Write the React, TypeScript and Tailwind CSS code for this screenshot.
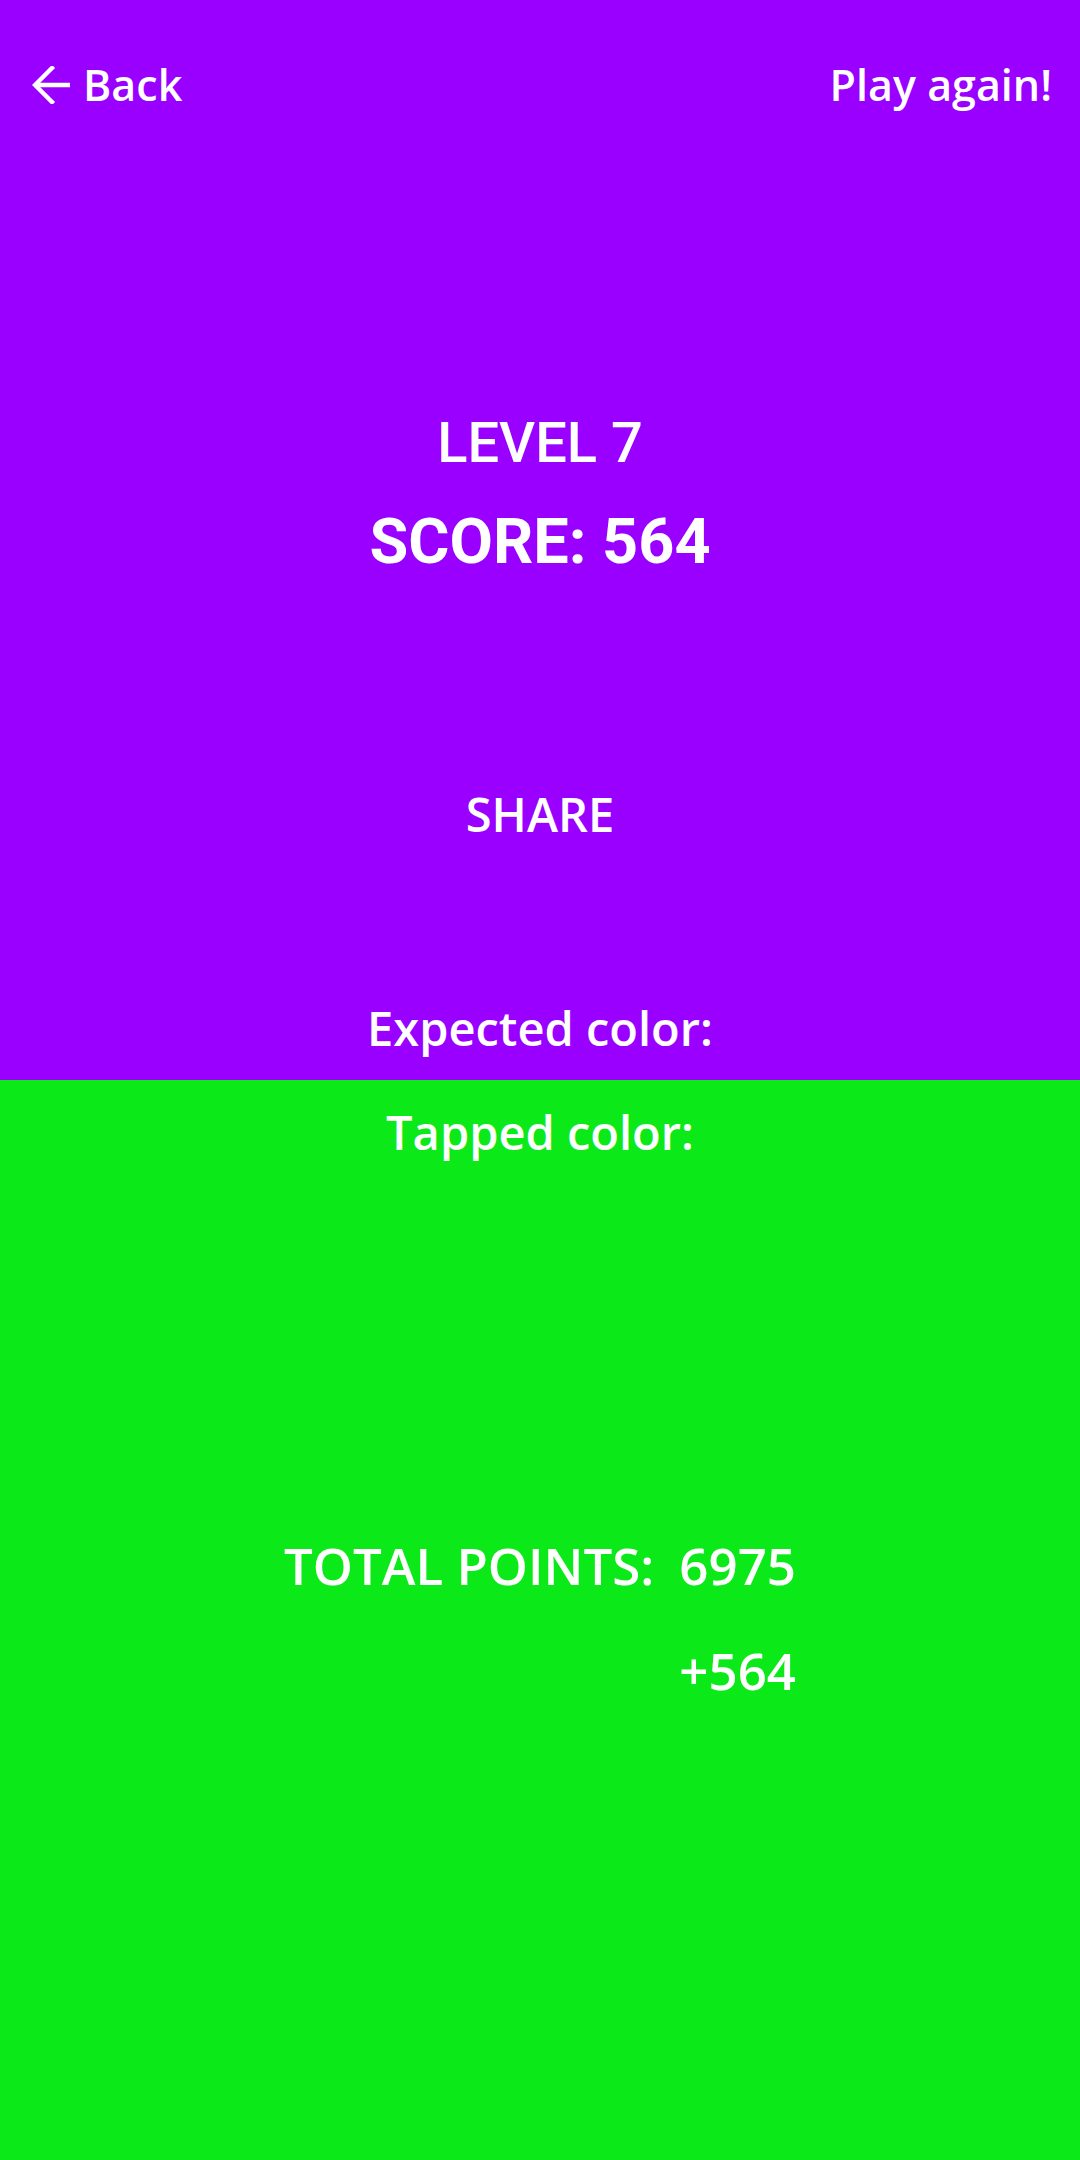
import React from 'react'

function BackArrow() {
  return (
    <svg width="39" height="38" viewBox="0 0 39 38" fill="none" stroke="white" strokeWidth="4.4" strokeLinejoin="miter">
      <path d="M3 19H38" strokeLinecap="butt" />
      <path d="M20 2L3 19L20 36" strokeLinecap="square" />
    </svg>
  )
}

export default function App() {
  const level = 7
  const score = 564
  const totalPoints = 6975

  return (
    <div className="flex flex-col w-[1080px] h-[2160px] text-white font-['Open_Sans',sans-serif] font-semibold">
      <div className="flex flex-col h-[1080px] bg-[#9900FF]">
        <div className="flex justify-between items-center pl-[32px] pr-[28px] pt-[63px]">
          <button className="flex items-center gap-[12px] text-[43px] leading-none">
            <BackArrow />
            <span>Back</span>
          </button>
          <button className="text-[43px] leading-none">Play again!</button>
        </div>

        <div className="flex flex-col items-center mt-[309px] font-['Roboto',sans-serif]">
          <p className="text-[56px] leading-none font-medium">LEVEL {level}</p>
          <p className="text-[63px] leading-none font-bold mt-[39px]">SCORE: {score}</p>
        </div>

        <button className="self-center text-[47px] leading-none mt-[218px]">SHARE</button>

        <p className="self-center text-[47px] leading-none mt-[167px]">Expected color:</p>
      </div>

      <div className="flex flex-col h-[1080px] bg-[#0BEA18]">
        <p className="self-center text-[47px] leading-none mt-[29px]">Tapped color:</p>

        <div className="flex justify-center gap-[25px] mt-[384px] text-[51px] leading-none">
          <div className="flex flex-col items-end">
            <span>TOTAL POINTS:</span>
          </div>
          <div className="flex flex-col items-start gap-[54px]">
            <span>{totalPoints}</span>
            <span>+{score}</span>
          </div>
        </div>
      </div>
    </div>
  )
}
